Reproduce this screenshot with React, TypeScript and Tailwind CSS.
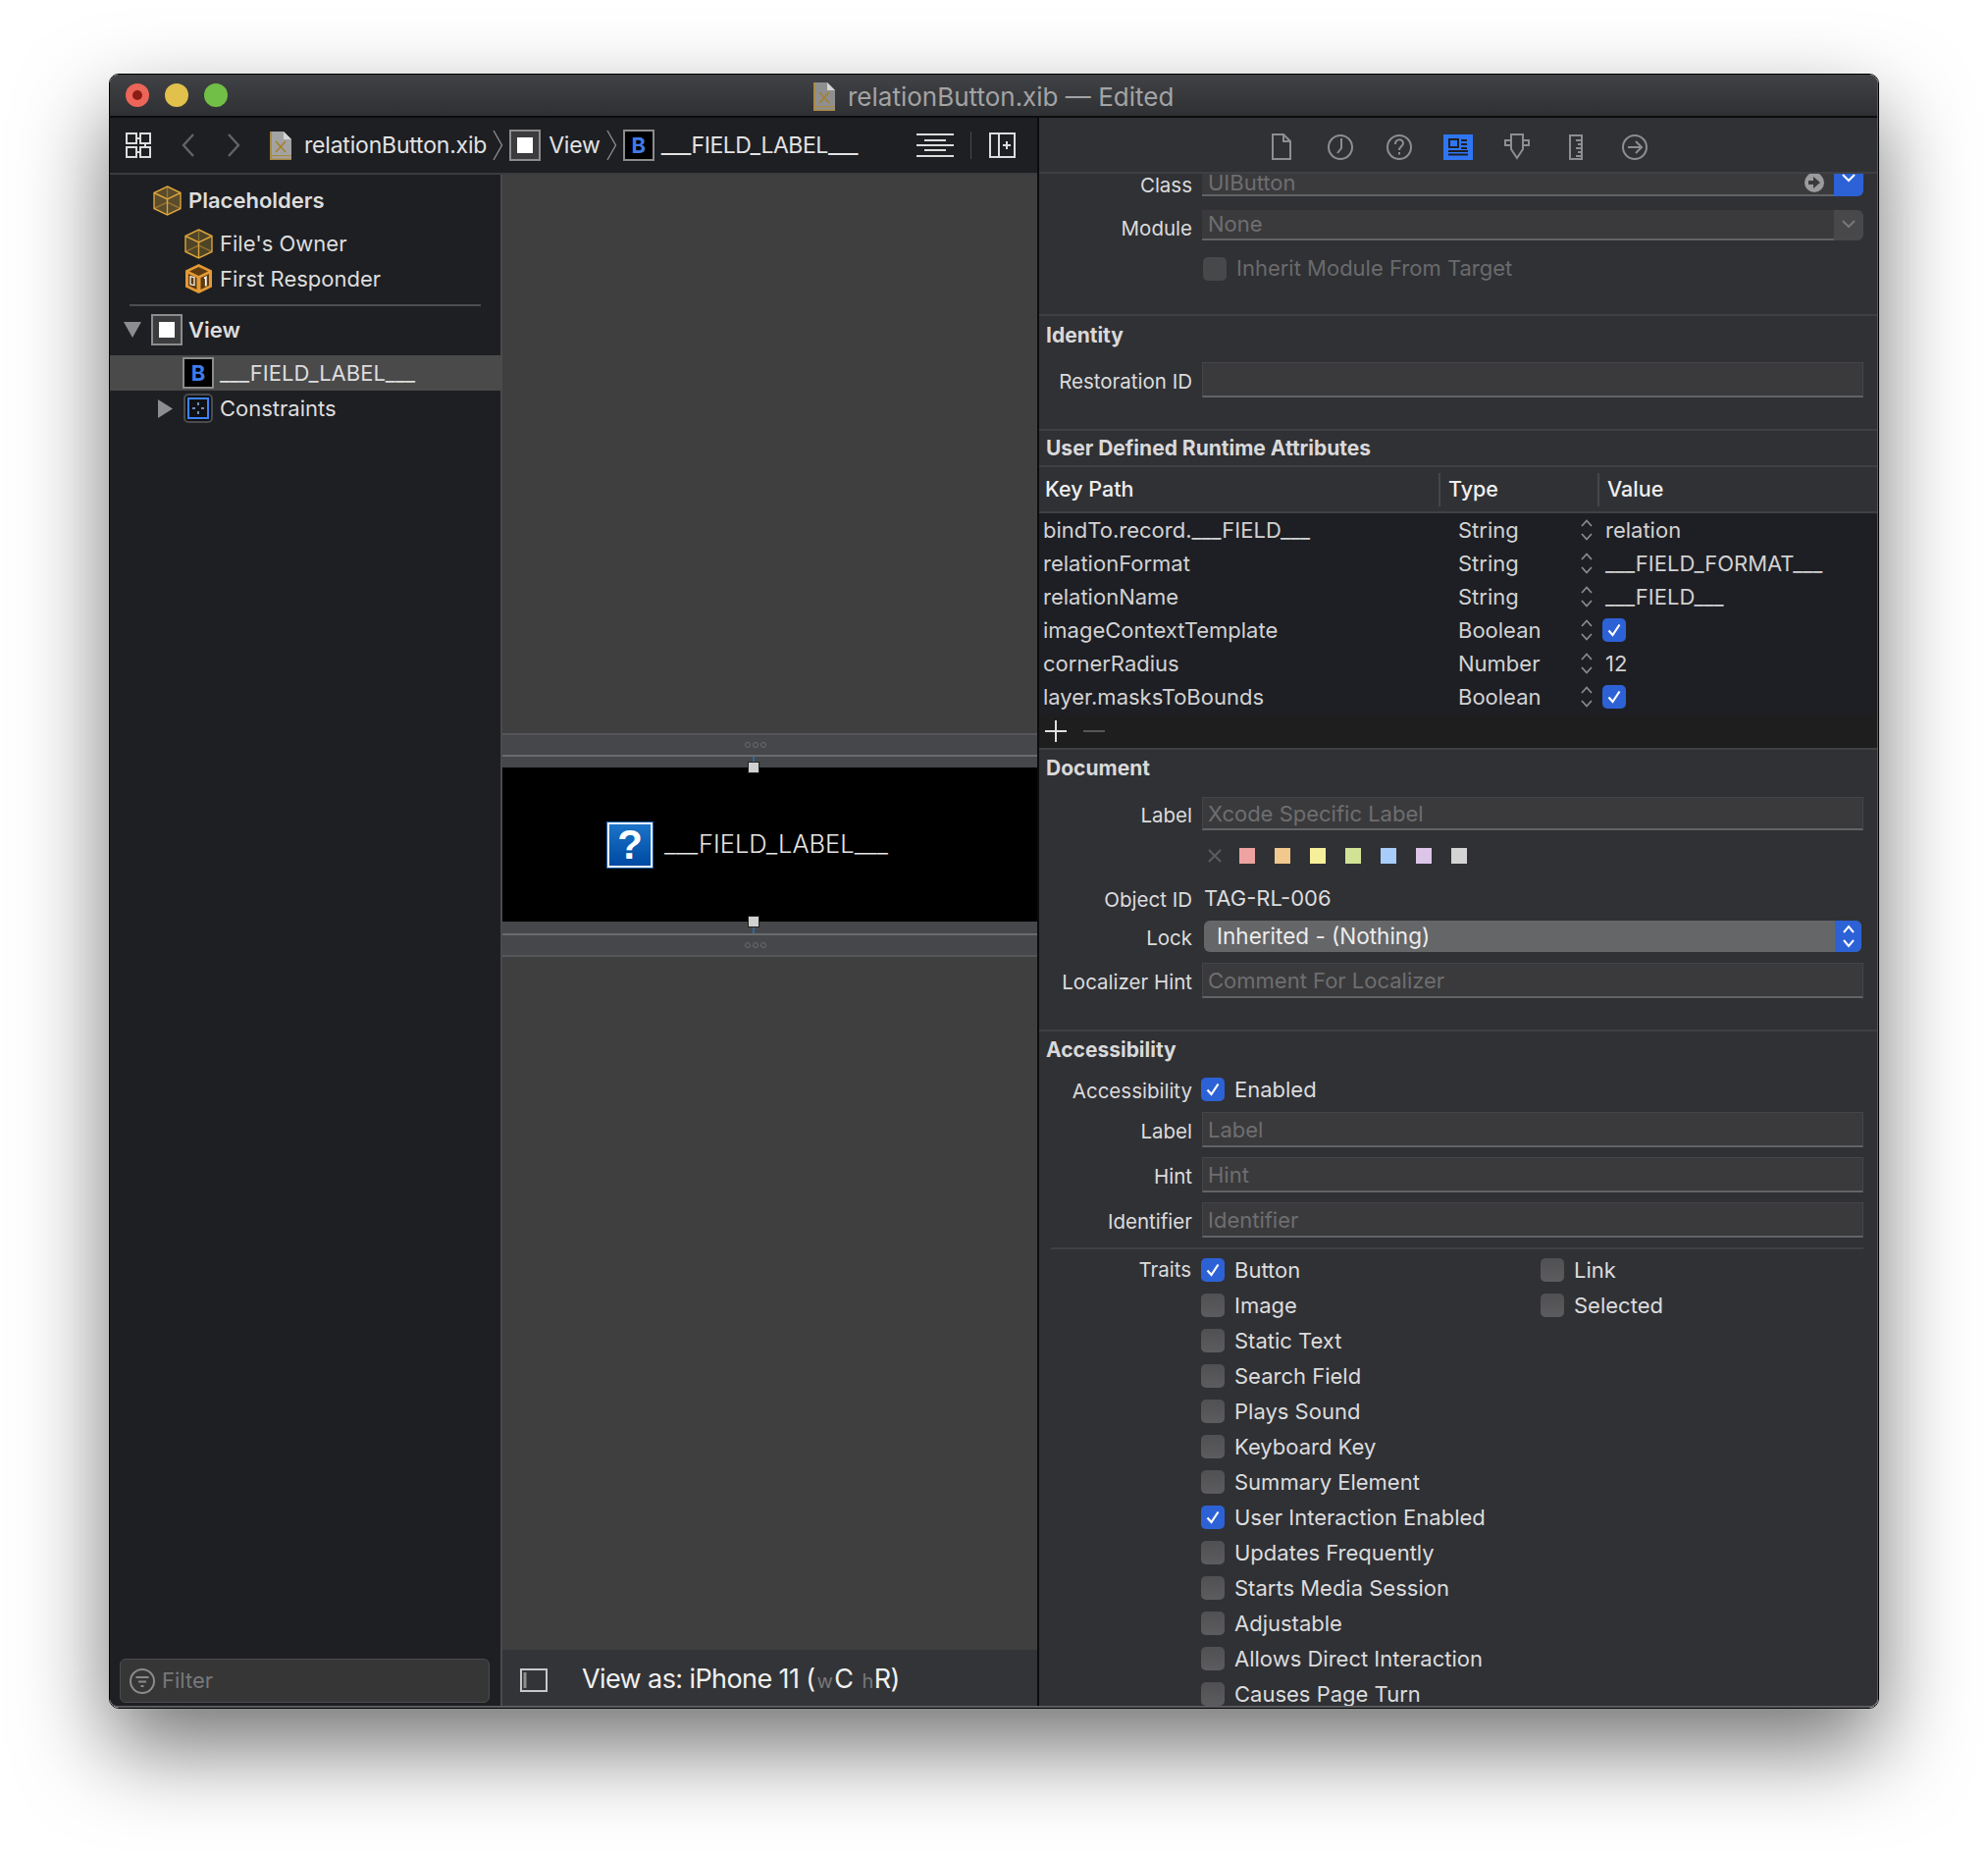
import type { ReactNode } from "react";

const traits: [string, boolean][] = [
  ["Image", false],
  ["Static Text", false],
  ["Search Field", false],
  ["Plays Sound", false],
  ["Keyboard Key", false],
  ["Summary Element", false],
  ["User Interaction Enabled", true],
  ["Updates Frequently", false],
  ["Starts Media Session", false],
  ["Adjustable", false],
  ["Allows Direct Interaction", false],
  ["Causes Page Turn", false],
];

const attributes: [string, string, string][] = [
  ["bindTo.record.___FIELD___", "String", "relation"],
  ["relationFormat", "String", "___FIELD_FORMAT___"],
  ["relationName", "String", "___FIELD___"],
  ["imageContextTemplate", "Boolean", "check"],
  ["cornerRadius", "Number", "12"],
  ["layer.masksToBounds", "Boolean", "check"],
];

const swatches = ["bg-[#eea3a0]", "bg-[#f1c88d]", "bg-[#f7f09b]", "bg-[#d3e396]", "bg-[#a9cdfb]", "bg-[#dcc5e9]", "bg-[#d4d4d4]"];

function CheckBox({ on }: { on?: boolean }) {
  if (on) {
    return (
      <span className="flex h-6 w-6 shrink-0 items-center justify-center rounded-[5px] bg-[#2d62d6]">
        <svg width="16" height="16" viewBox="0 0 16 16" fill="none" stroke="white" strokeWidth="2.2">
          <path d="M2.5 8.5 6.5 13 13.5 2.5" />
        </svg>
      </span>
    );
  }
  return <span className="block h-6 w-6 shrink-0 rounded-[5px] bg-gradient-to-b from-[#505052] to-[#5c5c5e]" />;
}

function Stepper() {
  return (
    <svg width="14" height="22" viewBox="0 0 14 22" fill="none" stroke="#8a8a8e" strokeWidth="1.8">
      <path d="M2 7 7 1.5 12 7M2 15l5 5.5 5-5.5" />
    </svg>
  );
}

function Cube({ faded }: { faded?: boolean }) {
  return (
    <svg width="29" height="31" viewBox="0 0 29 31" fill="none" stroke="#dca43a" strokeWidth="1.4">
      <path d="M14.5 1 28 7.5v16L14.5 30 1 23.5v-16z" fill={faded ? "#5a4c2c" : "#4e4428"} />
      <path d="M1 7.5 14.5 14 28 7.5M14.5 14v16" />
      <path d="M1 23.5 14.5 17 28 23.5M14.5 1v16" strokeOpacity=".45" />
    </svg>
  );
}

function ResponderBox() {
  return (
    <svg width="29" height="32" viewBox="0 0 29 32">
      <path d="M14.5 1 28 7.5v17L14.5 31 1 24.5v-17z" fill="#e39a35" />
      <path d="M14.5 4 24 8.5 14.5 13 5 8.5z" fill="#5e3a10" />
      <path d="M4 11l8.5 4v12L4 23z" fill="#5e3a10" />
      <path d="M16.500 15 25 11v12l-8.500 4z" fill="#5e3a10" />
      <rect x="6" y="14.500" width="4" height="8" fill="none" stroke="#fff" strokeWidth="1.2" transform="skewY(12) translate(0 -2)" />
      <path d="M20 15.500l1.800-1v9" fill="none" stroke="#fff" strokeWidth="1.800" />
    </svg>
  );
}

function XibFile({ dim }: { dim?: boolean }) {
  return (
    <svg width="22" height="29" viewBox="0 0 22 29">
      <path d="M0 0h14l8 8v21H0z" fill={dim ? "#8f8f8f" : "#a3a3a3"} />
      <path d="M14 0l8 8h-8z" fill="#d5d5d5" />
      <path d="M0 0h2v29H0zM0 24h22v1.200H0zM0 27.500h22V29H0z" fill="#a98a45" />
      <path d="M6 10l10 11M16 10 6 21" stroke="#a5802e" strokeWidth="1.600" />
    </svg>
  );
}

function ViewIcon() {
  return (
    <span className="flex h-8 w-8 shrink-0 items-center justify-center border-2 border-[#8c8c8c] bg-[#3c3c3e]">
      <span className="block h-4 w-4 bg-white" />
    </span>
  );
}

function ButtonIcon() {
  return (
    <span className="flex h-8 w-8 shrink-0 items-center justify-center border-2 border-[#8c8c8c] bg-black text-[22px] font-bold leading-none tracking-normal text-[#3f7ce8]">
      B
    </span>
  );
}

function Chevron() {
  return (
    <svg width="11" height="32" viewBox="0 0 11 32" fill="none" stroke="#8a8a8c" strokeWidth="1.4" className="shrink-0">
      <path d="M1 1 9.500 16 1 31" />
    </svg>
  );
}

function Heading({ children, className }: { children: ReactNode; className: string }) {
  return <div className={`flex shrink-0 items-center pl-[7px] text-[21px] font-bold text-[#d9d9da] ${className}`}>{children}</div>;
}

function Separator({ className = "" }: { className?: string }) {
  return <div className={`h-[2px] shrink-0 bg-[#3f4043] ${className}`} />;
}

function Row({ label, className = "", labelClass = "pt-1", children }: { label?: string; className?: string; labelClass?: string; children?: ReactNode }) {
  return (
    <div className={`flex shrink-0 items-center gap-[10px] ${className}`}>
      <span className={`w-[156px] shrink-0 whitespace-nowrap text-right text-[20.5px] leading-6 text-[#dcdcdd] ${labelClass}`}>{label}</span>
      {children}
    </div>
  );
}

function Field({ placeholder, className = "h-9" }: { placeholder?: string; className?: string }) {
  return (
    <div className={`flex flex-1 items-center border border-b-2 border-[#444547] border-b-[#626365] bg-[#3a3a3c] pl-[5px] pt-[2px] text-[22px] text-[#6e6e70] ${className}`}>
      {placeholder}
    </div>
  );
}

function InspectorIcons() {
  const stroke = "#8e8e90";
  return (
    <div className="flex h-[55px] shrink-0 items-center justify-center pt-[4px]">
      <span className="flex w-[60px] justify-center">
        <svg width="22" height="27" viewBox="0 0 22 27" fill="none" stroke={stroke} strokeWidth="2">
          <path d="M2 1h11l7 7v18H2zM13 1v7h7" />
        </svg>
      </span>
      <span className="flex w-[60px] justify-center">
        <svg width="26" height="26" viewBox="0 0 26 26" fill="none" stroke={stroke} strokeWidth="2">
          <circle cx="13" cy="13" r="12" />
          <path d="M14 4v10l-4 5" />
        </svg>
      </span>
      <span className="flex w-[60px] justify-center">
        <svg width="26" height="26" viewBox="0 0 26 26" fill="none" stroke={stroke} strokeWidth="2">
          <circle cx="13" cy="13" r="12" />
          <path d="M9 10c0-6 8-6 8-1 0 3-4 3-4 7M13 18v2.500" />
        </svg>
      </span>
      <span className="flex w-[60px] justify-center">
        <svg width="30" height="26" viewBox="0 0 30 26" fill="none">
          <rect width="30" height="26" fill="#2f76f4" />
          <path d="M6 5h9v8H6zM18 6h6M18 10h6M18 14h6M5 17h20M5 20.500h20" stroke="#1e1f23" strokeWidth="2" />
        </svg>
      </span>
      <span className="flex w-[60px] justify-center">
        <svg width="26" height="27" viewBox="0 0 26 27" fill="none" stroke={stroke} strokeWidth="2">
          <path d="M7 1h12v15l-6 9-6-9zM7 7H1v5h6M19 7h6v5h-6" />
        </svg>
      </span>
      <span className="flex w-[60px] justify-center">
        <svg width="14" height="26" viewBox="0 0 14 26" fill="none" stroke={stroke} strokeWidth="2">
          <path d="M1 1h12v24H1zM7 6h6M9 10h4M7 14h6M9 18h4M7 22h6" />
        </svg>
      </span>
      <span className="flex w-[60px] justify-center">
        <svg width="26" height="26" viewBox="0 0 26 26" fill="none" stroke={stroke} strokeWidth="2">
          <circle cx="13" cy="13" r="12" />
          <path d="M6 13h14M14 7l6 6-6 6" />
        </svg>
      </span>
    </div>
  );
}

function Handle() {
  return <span className="block h-3 w-3 border border-[#222] bg-[#d0d0d0]" />;
}

function ResizeBar() {
  return (
    <div className="flex h-5 items-center justify-center gap-[2px] bg-[#45474a] pr-[30px]">
      <span className="block h-[6px] w-[6px] rounded-full border border-[#6a6b6e]" />
      <span className="block h-[6px] w-[6px] rounded-full border border-[#6a6b6e]" />
      <span className="block h-[6px] w-[6px] rounded-full border border-[#6a6b6e]" />
    </div>
  );
}

function OutlineRow({ icon, toggle, selected, bold, label, indent, height = "h-9" }: { icon: ReactNode; toggle?: ReactNode; selected?: boolean; bold?: boolean; label: string; indent: string; height?: string }) {
  return (
    <div className={`flex items-center ${height} ${indent} ${selected ? "bg-[#4a4a4b]" : ""}`}>
      <span className="flex w-[0px] justify-end pr-[10px]">{toggle}</span>
      <span className="flex w-8 items-center justify-center">{icon}</span>
      <span className={`ml-[6px] whitespace-nowrap text-[22px] text-[#dddddd] ${bold ? "font-semibold" : ""}`}>{label}</span>
    </div>
  );
}

export default function App() {
  return (
    <div className="h-[1886px] w-[2026px] overflow-hidden bg-white pl-[111px] pt-[75px] [font-family:Inter,sans-serif]">
      <div className="h-[1666px] w-[1804px] overflow-hidden rounded-[10px] border border-black shadow-[0_40px_90px_rgba(0,0,0,0.55)]">
        <div className="flex h-full flex-col overflow-hidden rounded-[9px] border-b-2 border-r border-[#5b5c5e] bg-[#303135]">
          {/* Title bar */}
          <div className="relative flex h-[44px] shrink-0 items-center border-b-2 border-[#0c0c0d] bg-gradient-to-b from-[#414245] to-[#2f3033] pl-[16px]">
            <div className="flex gap-4">
              <span className="flex h-6 w-6 items-center justify-center rounded-full bg-[#ec6559]">
                <span className="block h-[10px] w-[10px] rounded-full bg-[#8c1d14]" />
              </span>
              <span className="block h-6 w-6 rounded-full bg-[#e1c04c]" />
              <span className="block h-6 w-6 rounded-full bg-[#71bf46]" />
            </div>
            <div className="ml-[597px] flex items-center gap-[13px] pt-[2px] text-[26px] text-[#a3a3a4]">
              <XibFile dim />
              <span className="whitespace-nowrap">relationButton.xib — Edited</span>
            </div>
          </div>

          <div className="flex min-h-0 flex-1">
            {/* Editor side */}
            <div className="flex w-[947px] shrink-0 flex-col border-r-2 border-[#0c0c0d]">
              <div className="flex h-[58px] shrink-0 items-center border-b-2 border-[#3a3b3e] bg-[#1e1f23] pl-[16px] text-[23px] tracking-[-0.2px] text-[#e2e2e2]">
                <svg width="26" height="26" viewBox="0 0 26 26" fill="none" stroke="#dcdcdc" strokeWidth="2" className="shrink-0">
                  <path d="M1 1h10v10H1zM15 1h10v10H15zM1 15h10v10H1zM15 15h10v10H15z" />
                  <path d="M11 6h4M11 20h4M20 11v4" />
                </svg>
                <svg width="14" height="26" viewBox="0 0 14 26" fill="none" stroke="#626366" strokeWidth="2.4" className="ml-[31px] shrink-0">
                  <path d="M12 2 2 13l10 11" />
                </svg>
                <svg width="14" height="26" viewBox="0 0 14 26" fill="none" stroke="#626366" strokeWidth="2.4" className="ml-[32px] shrink-0">
                  <path d="M2 2l10 11L2 24" />
                </svg>
                <span className="ml-[30px] shrink-0">
                  <XibFile />
                </span>
                <span className="ml-[13px] whitespace-nowrap">relationButton.xib</span>
                <span className="ml-[6px]"><Chevron /></span>
                <span className="ml-[6px]"><ViewIcon /></span>
                <span className="ml-[8px]">View</span>
                <span className="ml-[6px]"><Chevron /></span>
                <span className="ml-[6px]"><ButtonIcon /></span>
                <span className="ml-[7px] whitespace-nowrap tracking-[-0.45px]">___FIELD_LABEL___</span>
                <svg width="38" height="26" viewBox="0 0 38 26" stroke="#dcdcdc" strokeWidth="2" className="ml-[60px] shrink-0">
                  <path d="M0 2h38M8 8h22M0 13h38M8 18h22M0 24h38" />
                </svg>
                <span className="ml-[17px] block h-7 w-[1px] bg-[#48494c]" />
                <svg width="27" height="26" viewBox="0 0 27 26" fill="none" stroke="#dcdcdc" strokeWidth="2" className="ml-[18px] shrink-0">
                  <path d="M1 1h25v24H1zM10 1v24M18 9v8M14 13h8" />
                </svg>
              </div>

              <div className="flex min-h-0 flex-1">
                {/* Outline */}
                <div className="flex w-[400px] shrink-0 flex-col border-r-2 border-[#4a4a4b] bg-[#1e1f23]">
                  <div className="pt-[8px]">
                    <OutlineRow label="Placeholders" bold indent="pl-[32px]" height="h-9" icon={<Cube faded />} />
                    <div className="mt-2">
                      <OutlineRow label="File's Owner" indent="pl-[64px]" icon={<Cube />} />
                      <OutlineRow label="First Responder" indent="pl-[64px]" icon={<ResponderBox />} />
                    </div>
                    <div className="mx-[20px] mt-[8px] h-[2px] bg-[#4c4d50]" />
                    <div className="mt-[6px]">
                      <OutlineRow
                        label="View"
                        bold
                        indent="pl-[32px]"
                        height="h-[36px]"
                        icon={<ViewIcon />}
                        toggle={<svg width="18" height="16" viewBox="0 0 18 16" className="shrink-0"><path d="M0 0h18L9 16z" fill="#8c8d90" /></svg>}
                      />
                    </div>
                    <div className="mt-[8px]">
                      <OutlineRow label="___FIELD_LABEL___" selected indent="pl-[64px]" icon={<ButtonIcon />} />
                      <OutlineRow
                        label="Constraints"
                        indent="pl-[64px]"
                        icon={
                          <span className="flex h-[30px] w-[30px] items-center justify-center rounded-[5px] border-2 border-[#4a4b4e] bg-[#101114]">
                            <svg width="22" height="22" viewBox="0 0 22 22" fill="none" stroke="#3b82f6" strokeWidth="2">
                              <path d="M1 1h20v20H1z" />
                              <path d="M11 5v3M11 14v3M5 11h3M14 11h3" strokeWidth="1.500" stroke="#8ab4f8" />
                            </svg>
                          </span>
                        }
                        toggle={<svg width="15" height="19" viewBox="0 0 15 19" className="shrink-0"><path d="M0 0l15 9.500L0 19z" fill="#8c8d90" /></svg>}
                      />
                    </div>
                  </div>
                  <div className="mt-auto pb-[3px] pl-[10px] pr-[11px]">
                    <div className="flex h-[45px] items-center gap-[7px] rounded-[6px] border border-[#4b4c4e] bg-[#363637] pl-[9px] text-[22px] text-[#77787a]">
                      <svg width="26" height="26" viewBox="0 0 26 26" fill="none" stroke="#8b8b8d" strokeWidth="2">
                        <circle cx="13" cy="13" r="12" />
                        <path d="M6.500 9h13M9 13.500h8M11.500 18h3" />
                      </svg>
                      Filter
                    </div>
                  </div>
                </div>

                {/* Canvas */}
                <div className="flex min-w-0 flex-1 flex-col bg-[#3f3f3f]">
                  <div className="h-[569px] shrink-0" />
                  <div className="h-[2px] shrink-0 bg-[#55565a]" />
                  <ResizeBar />
                  <div className="h-[2px] shrink-0 bg-[#6a6b6e]" />
                  <div className="relative">
                    <div className="h-[11px] bg-[#45474a]" />
                    <div className="flex h-[157px] items-center bg-black pl-[107px]">
                      <span className="flex h-[46px] w-[46px] items-center justify-center border-2 border-[#e6eef8] bg-gradient-to-b from-[#1c74c8] to-[#0049a3] text-[42px] font-bold leading-none text-white outline outline-1 outline-[#1c5ea8] [font-family:Liberation_Sans,sans-serif]">
                        ?
                      </span>
                      <span className="ml-[12px] whitespace-nowrap text-[25.5px] font-light text-[#e6e6e6]">___FIELD_LABEL___</span>
                    </div>
                    <div className="h-[12px] bg-[#45474a]" />
                    <span className="absolute left-[250px] top-[5px]"><Handle /></span>
                    <span className="absolute left-[250px] top-[162px]"><Handle /></span>
                    <span className="absolute left-[255px] top-0 block h-[5px] w-[2px] bg-[#33679c]" />
                    <span className="absolute left-[255px] top-[174px] block h-[6px] w-[2px] bg-[#33679c]" />
                  </div>
                  <div className="h-[2px] shrink-0 bg-[#6a6b6e]" />
                  <ResizeBar />
                  <div className="h-[2px] shrink-0 bg-[#55565a]" />
                  <div className="mt-auto flex h-[57px] shrink-0 items-center bg-[#333437] pl-[18px] pt-1 text-[27px] tracking-[-0.6px] text-[#f0f0f0]">
                    <svg width="28" height="24" viewBox="0 0 28 24" fill="none" stroke="#c8c8c8" strokeWidth="2" className="shrink-0">
                      <path d="M1 1h26v22H1z" />
                      <path d="M5 4v16" strokeWidth="3" stroke="#8f8f8f" />
                    </svg>
                    <span className="ml-[35px] whitespace-nowrap">
                      View as: iPhone 11 (<span className="mx-[2px] text-[20px] text-[#77787a]">w</span>C<span className="ml-[9px] mr-[1px] text-[20px] text-[#77787a]">h</span>R)
                    </span>
                  </div>
                </div>
              </div>
            </div>

            {/* Inspector */}
            <div className="flex min-w-0 flex-1 flex-col overflow-hidden bg-[#303135] pr-[14px]">
              <div className="-mr-[14px] border-b-2 border-[#3f4043]">
                <InspectorIcons />
              </div>

              <Row label="Class" labelClass="" className="h-[23px]">
                <div className="relative flex h-[23px] flex-1 overflow-hidden">
                  <div className="flex flex-1 items-center border-b-2 border-[#626365] bg-[#3a3a3c] pb-[2px] pl-[6px] text-[22px] text-[#6e6e70]">UIButton</div>
                  <span className="absolute right-[40px] top-[-1px] flex h-5 w-5 items-center justify-center rounded-full bg-[#9b9b9d]">
                    <svg width="12" height="12" viewBox="0 0 12 12" fill="#3a3a3c"><path d="M0 4h5V0l7 6-7 6V8H0z" /></svg>
                  </span>
                  <span className="flex w-[30px] justify-center rounded-br-[6px] bg-[#2d62d6]">
                    <svg width="14" height="10" viewBox="0 0 14 10" fill="none" stroke="white" strokeWidth="2"><path d="M1 1l6 6 6-6" /></svg>
                  </span>
                </div>
              </Row>
              <Row label="Module" labelClass="pt-2" className="mt-[13px]">
                <div className="flex h-[31px] flex-1">
                  <div className="flex flex-1 items-center border-b-2 border-[#626365] bg-[#3a3a3c] pl-[6px] text-[22px] text-[#6e6e70]">None</div>
                  <span className="flex w-[30px] items-center justify-center rounded-r-[6px] bg-[#48484a]">
                    <svg width="14" height="10" viewBox="0 0 14 10" fill="none" stroke="#77787a" strokeWidth="2"><path d="M1 1l6 6 6-6" /></svg>
                  </span>
                </div>
              </Row>
              <Row className="mt-[12px]">
                <span className="ml-[1px] block h-6 w-6 rounded-[5px] bg-[#47484a]" />
                <span className="whitespace-nowrap text-[22px] text-[#6a6a6c]">Inherit Module From Target</span>
              </Row>
              <Separator className="-mr-[14px] mt-[30px]" />

              <Heading className="h-[47px] pb-[8px]">Identity</Heading>
              <Row label="Restoration ID">
                <Field />
              </Row>
              <Separator className="-mr-[14px] mt-[32px]" />

              <Heading className="h-[35px]">User Defined Runtime Attributes</Heading>
              <Separator className="-mr-[14px]" />
              <div className="-mr-[14px] flex h-[45px] shrink-0 items-center text-[21.5px] font-medium text-[#efefef]">
                <span className="w-[407px] pl-[6px]">Key Path</span>
                <span className="h-[34px] w-[2px] bg-[#45464a]" />
                <span className="w-[160px] pl-[8px]">Type</span>
                <span className="h-[34px] w-[2px] bg-[#45464a]" />
                <span className="pl-[8px]">Value</span>
              </div>
              <Separator className="-mr-[14px]" />
              <div className="-mr-[14px] shrink-0 bg-[#1e1f24] text-[22px] text-[#d2d2d3]">
                {attributes.map(([key, type, value]) => (
                  <div key={key} className="flex h-[34px] items-center">
                    <span className="w-[427px] whitespace-nowrap pl-[4px]">{key}</span>
                    <span className="w-[124px]">{type}</span>
                    <Stepper />
                    {value === "check" ? (
                      <span className="ml-[9px]">
                        <CheckBox on />
                      </span>
                    ) : (
                      <span className="ml-[12px] whitespace-nowrap">{value}</span>
                    )}
                  </div>
                ))}
              </div>
              <div className="-mr-[14px] flex h-[35px] shrink-0 items-center gap-[17px] bg-[#1e1e1e] pl-[6px]">
                <svg width="22" height="22" viewBox="0 0 22 22" stroke="#e0e0e0" strokeWidth="2"><path d="M11 0v22M0 11h22" /></svg>
                <svg width="22" height="22" viewBox="0 0 22 22" stroke="#55565a" strokeWidth="2"><path d="M0 11h22" /></svg>
              </div>
              <Separator className="-mr-[14px]" />

              <Heading className="h-[48px] pb-[10px]">Document</Heading>
              <Row label="Label">
                <Field placeholder="Xcode Specific Label" className="h-[34px]" />
              </Row>
              <div className="ml-[166px] mt-[18px] flex h-4 shrink-0 items-center">
                <svg width="14" height="14" viewBox="0 0 14 14" stroke="#5c5d60" strokeWidth="2" className="ml-[6px] mr-[18px]"><path d="M1 1l12 12M13 1 1 13" /></svg>
                <div className="flex gap-[20px]">
                  {swatches.map((color) => (
                    <span key={color} className={`block h-4 w-4 ${color}`} />
                  ))}
                </div>
              </div>
              <Row label="Object ID" className="mt-[23px] h-[24px]">
                <span className="ml-[2px] whitespace-nowrap text-[22px] text-[#dcdcdd]">TAG-RL-006</span>
              </Row>
              <Row label="Lock" className="mt-[11px]">
                <div className="ml-[2px] mr-[2px] flex h-[32px] flex-1 overflow-hidden rounded-[6px] bg-[#656668] text-[22.5px] text-[#ececec]">
                  <span className="flex flex-1 items-center pl-[13px]">Inherited - (Nothing)</span>
                  <span className="flex w-[27px] items-center justify-center bg-[#2d62d6]">
                    <svg width="14" height="24" viewBox="0 0 14 24" fill="none" stroke="white" strokeWidth="2"><path d="M2 8l5-6 5 6M2 16l5 6 5-6" /></svg>
                  </span>
                </div>
              </Row>
              <Row label="Localizer Hint" className="mt-[11px]">
                <Field placeholder="Comment For Localizer" />
              </Row>
              <Separator className="-mr-[14px] mt-[32px]" />

              <Heading className="h-[38px]">Accessibility</Heading>
              <Row label="Accessibility" className="mt-[9px] h-[24px]">
                <span className="-ml-[1px]"><CheckBox on /></span>
                <span className="text-[22px] text-[#dcdcdd]">Enabled</span>
              </Row>
              <Row label="Label" className="mt-[11px]">
                <Field placeholder="Label" />
              </Row>
              <Row label="Hint" className="mt-[10px]">
                <Field placeholder="Hint" />
              </Row>
              <Row label="Identifier" className="mt-[10px]">
                <Field placeholder="Identifier" />
              </Row>
              <Separator className="ml-[12px] mt-[10px]" />

              <div className="mt-[3px] flex h-[36px] shrink-0 items-center gap-[10px]">
                <span className="w-[155px] text-right text-[20.5px] text-[#dcdcdd]">Traits</span>
                <CheckBox on />
                <span className="w-[302px] text-[22px] text-[#dcdcdd]">Button</span>
                <CheckBox />
                <span className="text-[22px] text-[#dcdcdd]">Link</span>
              </div>
              {traits.map(([name, on], i) => (
                <div key={name} className="flex h-[36px] shrink-0 items-center gap-[10px] pl-[165px]">
                  <CheckBox on={on} />
                  <span className="w-[302px] whitespace-nowrap text-[22px] text-[#dcdcdd]">{name}</span>
                  {i === 0 && <CheckBox />}
                  {i === 0 && <span className="text-[22px] text-[#dcdcdd]">Selected</span>}
                </div>
              ))}
            </div>
          </div>
        </div>
      </div>
    </div>
  );
}
